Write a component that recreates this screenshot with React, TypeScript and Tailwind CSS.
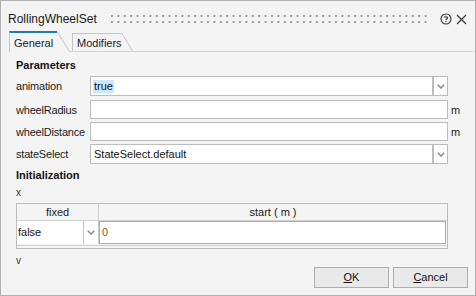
import React from "react";

function Chevron() {
  return (
    <svg width="8" height="5" viewBox="0 0 8 5">
      <path d="M0.8 0.8 L4 4 L7.2 0.8" stroke="#8c8c8c" strokeWidth="1.6" fill="none" />
    </svg>
  );
}

function Combo({ children }: { children?: React.ReactNode }) {
  return (
    <div className="flex h-[20px]">
      <div className="flex-1 bg-white border border-[#bcbcbc] flex items-center pl-[2px]">{children}</div>
      <div className="w-[15px] bg-white border border-[#bcbcbc] flex items-center justify-center">
        <Chevron />
      </div>
    </div>
  );
}

function Row({ label, children, unit, h, mt }: { label: string; children: React.ReactNode; unit?: string; h: string; mt: string }) {
  return (
    <div className={`flex items-center ${h} ${mt}`}>
      <div className="w-[74px] shrink-0 text-[11px] tracking-[-0.2px] text-[#1a1a1a] leading-[14px]">{label}</div>
      <div className="w-[358px] shrink-0 h-full">{children}</div>
      <div className="pl-[3px] text-[11px] text-[#1a1a1a] leading-[14px]">{unit}</div>
    </div>
  );
}

export default function App() {
  return (
    <div className="w-[476px] h-[296px] bg-[#f4f4f4] border border-[#b4b4b4] flex flex-col font-['Liberation_Sans',Arial,sans-serif] overflow-hidden">
      {/* title bar */}
      <div className="h-[30px] flex items-center pt-[6px] pl-[7px] pr-[8px]">
        <div className="text-[12px] leading-[14px] text-[#1a1a1a]">RollingWheelSet</div>
        <svg className="ml-[14px]" width="316" height="8">
          <defs>
            <pattern id="dots" width="6.4" height="6" patternUnits="userSpaceOnUse">
              <rect x="0" y="0" width="2" height="2" fill="#9c9c9c" />
            </pattern>
          </defs>
          <rect x="0" y="0" width="316" height="8" fill="url(#dots)" />
        </svg>
        <div className="flex-1" />
        <svg width="12" height="12" viewBox="0 0 12 12" className="mr-[4px]">
          <circle cx="6" cy="6" r="5" stroke="#333" strokeWidth="1.1" fill="none" />
          <path d="M4.3 4.6 C4.3 3.4 7.7 3.4 7.7 4.7 C7.7 5.7 6 5.8 6 7" stroke="#333" strokeWidth="1.1" fill="none" />
          <rect x="5.45" y="8" width="1.1" height="1.2" fill="#333" />
        </svg>
        <svg width="11" height="11" viewBox="0 0 11 11">
          <path d="M1 1 L10 10 M10 1 L1 10" stroke="#333" strokeWidth="1.1" />
        </svg>
      </div>

      {/* tabs */}
      <div className="flex items-end h-[21px]">
        <div className="w-[8px]" />
        <div className="flex h-[21px]">
          <div className="w-[48px] border-l border-l-[#c4c4c4] border-t-2 border-t-[#2478b4] text-[11px] leading-[14px] text-[#1a1a1a] pl-[4px] pt-[3px]">General</div>
          <svg width="13" height="21" viewBox="0 0 13 21">
            <path d="M0 0.5 L12.5 20.5" stroke="#c4c4c4" strokeWidth="1" fill="none" />
          </svg>
        </div>
        <div className="w-[2px] h-[1px] bg-[#d2d2d2]" />
        <div className="flex h-[19px] border-b border-[#d2d2d2]">
          <div className="w-[50px] border-l border-t border-[#c4c4c4] text-[11px] leading-[14px] text-[#1a1a1a] pl-[4px] pt-[2px]">Modifiers</div>
          <svg width="11" height="18" viewBox="0 0 11 18">
            <path d="M0 0.5 L10.5 18" stroke="#c4c4c4" strokeWidth="1" fill="none" />
          </svg>
        </div>
        <div className="flex-1 h-[1px] bg-[#d2d2d2]" />
      </div>

      {/* content */}
      <div className="flex flex-col pl-[15px]">
        <div className="mt-[6px] text-[11px] leading-[14px] font-bold text-[#111]">Parameters</div>
        <Row label="animation" h="h-[20px]" mt="mt-[4px]">
          <Combo>
            <span className="text-[11px] leading-[13px] text-[#111] bg-[#cce8ff] px-[1px]">true</span>
          </Combo>
        </Row>
        <Row label="wheelRadius" unit="m" h="h-[19px]" mt="mt-[4px]">
          <div className="h-full bg-white border border-[#bcbcbc]" />
        </Row>
        <Row label="wheelDistance" unit="m" h="h-[19px]" mt="mt-[3px]">
          <div className="h-full bg-white border border-[#bcbcbc]" />
        </Row>
        <Row label="stateSelect" h="h-[20px]" mt="mt-[3px]">
          <Combo>
            <span className="text-[11px] leading-[13px] text-[#111] pl-[1px]">StateSelect.default</span>
          </Combo>
        </Row>
        <div className="mt-[4px] text-[11px] leading-[14px] font-bold text-[#111]">Initialization</div>
        <div className="mt-[4px] text-[10px] leading-[14px] text-[#333]">x</div>

        {/* table */}
        <div className="mt-[3px] w-[432px] h-[46px] border border-[#bdbdbd] flex flex-col">
          <div className="flex h-[17px] border-b border-[#d0d0d0]">
            <div className="w-[82px] border-r border-[#d0d0d0] flex items-center justify-center text-[11px] text-[#1a1a1a]">fixed</div>
            <div className="flex-1 flex items-center justify-center text-[11px] text-[#1a1a1a]">start ( m )</div>
          </div>
          <div className="flex h-[23px]">
            <div className="w-[82px] flex border-r border-[#c8c8c8]">
              <div className="flex-1 bg-white border-r border-[#c8c8c8] flex items-center pl-[1px] text-[11px] text-[#111]">false</div>
              <div className="w-[14px] bg-white flex items-center justify-center">
                <Chevron />
              </div>
            </div>
            <div className="flex-1 pr-[1px]">
              <div className="h-full bg-white border border-[#acacac] flex items-center pl-[2px] text-[11px] text-[#8a5a10]">0</div>
            </div>
          </div>
          <div className="h-[2px] border-b border-[#d0d0d0]" />
        </div>

        <div className="flex justify-between items-start pr-[7px]">
          <div className="mt-[5px] text-[10px] leading-[14px] text-[#333]">v</div>
          <div className="mt-[18px] flex gap-[4px]">
            <button className="w-[75px] h-[21px] bg-[#e9e9e9] border border-[#adadad] text-[11px] text-[#111] flex items-center justify-center">
              <span><span className="underline">O</span>K</span>
            </button>
            <button className="w-[75px] h-[21px] bg-[#e9e9e9] border border-[#adadad] text-[11px] text-[#111] flex items-center justify-center">
              <span><span className="underline">C</span>ancel</span>
            </button>
          </div>
        </div>
      </div>
    </div>
  );
}
